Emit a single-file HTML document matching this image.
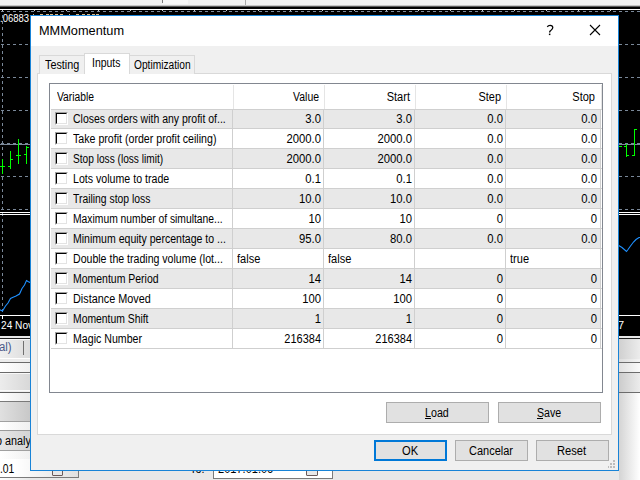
<!DOCTYPE html>
<html><head><meta charset="utf-8"><style>
html,body{margin:0;padding:0;}
body{width:640px;height:480px;overflow:hidden;position:relative;background:#000;font-family:"Liberation Sans", sans-serif;}
body>div{position:absolute;}
.t{white-space:pre;line-height:16px;font-family:"Liberation Sans", sans-serif;}
.cb{width:13px;height:13px;box-sizing:border-box;background:#fff;border-top:1px solid #a0a0a0;border-left:1px solid #a0a0a0;border-right:1px solid #fff;border-bottom:1px solid #fff;}
.cb::before{content:"";position:absolute;left:0;top:0;width:11px;height:11px;box-sizing:border-box;border-top:1px solid #000;border-left:1px solid #000;border-right:1px solid #e3e3e3;border-bottom:1px solid #e3e3e3;}
</style></head><body>
<div style="left:0px;top:0px;width:640px;height:5px;background:#f0f0f0;"></div>
<div style="left:162px;top:0px;width:1px;height:3px;background:#7a7a7a;"></div>
<div style="left:163px;top:0px;width:25px;height:4px;background:#f8f8f8;"></div>
<div style="left:245px;top:0px;width:1px;height:5px;background:#a8a8a8;"></div>
<div style="left:0px;top:5px;width:640px;height:1px;background:#c4c4c4;"></div>
<div style="left:0px;top:6px;width:640px;height:1px;background:#5a5a5a;"></div>
<div style="left:0px;top:7px;width:640px;height:2px;background:#000;"></div>
<div style="left:0px;top:9px;width:640px;height:1px;background:#fff;"></div>
<div style="left:0px;top:10px;width:640px;height:326px;background:#000;"></div>
<div style="left:1px;top:11px;width:639px;height:1px;background:repeating-linear-gradient(90deg,#7a8899 0 3px,transparent 3px 6px)"></div>
<div style="left:1px;top:44px;width:639px;height:1px;background:repeating-linear-gradient(90deg,#7a8899 0 3px,transparent 3px 6px)"></div>
<div style="left:1px;top:77px;width:639px;height:1px;background:repeating-linear-gradient(90deg,#7a8899 0 3px,transparent 3px 6px)"></div>
<div style="left:1px;top:110px;width:639px;height:1px;background:repeating-linear-gradient(90deg,#7a8899 0 3px,transparent 3px 6px)"></div>
<div style="left:1px;top:176px;width:639px;height:1px;background:repeating-linear-gradient(90deg,#7a8899 0 3px,transparent 3px 6px)"></div>
<div style="left:1px;top:209px;width:639px;height:1px;background:repeating-linear-gradient(90deg,#7a8899 0 3px,transparent 3px 6px)"></div>
<div style="left:0px;top:144px;width:640px;height:1px;background:#7a8899;"></div>
<div style="left:1px;top:143px;width:639px;height:1px;background:repeating-linear-gradient(90deg,#7a8899 0 3px,transparent 3px 6px)"></div>
<div style="left:2px;top:9px;width:1px;height:306px;background:repeating-linear-gradient(180deg,#7a8899 0 3px,transparent 3px 6px)"></div>
<div style="left:2px;top:9px;width:1px;height:1px;background:#fff;"></div>
<div style="left:2px;top:10px;width:1px;height:1px;background:#c8c8c8;"></div>
<div style="left:34px;top:10px;width:1px;height:1px;background:#c8c8c8;"></div>
<div style="left:66px;top:10px;width:1px;height:1px;background:#c8c8c8;"></div>
<div style="left:98px;top:10px;width:1px;height:1px;background:#c8c8c8;"></div>
<div style="left:130px;top:10px;width:1px;height:1px;background:#c8c8c8;"></div>
<div style="left:162px;top:10px;width:1px;height:1px;background:#c8c8c8;"></div>
<div style="left:194px;top:10px;width:1px;height:1px;background:#c8c8c8;"></div>
<div style="left:226px;top:10px;width:1px;height:1px;background:#c8c8c8;"></div>
<div style="left:258px;top:10px;width:1px;height:1px;background:#c8c8c8;"></div>
<div style="left:290px;top:10px;width:1px;height:1px;background:#c8c8c8;"></div>
<div style="left:322px;top:10px;width:1px;height:1px;background:#c8c8c8;"></div>
<div style="left:354px;top:10px;width:1px;height:1px;background:#c8c8c8;"></div>
<div style="left:386px;top:10px;width:1px;height:1px;background:#c8c8c8;"></div>
<div style="left:418px;top:10px;width:1px;height:1px;background:#c8c8c8;"></div>
<div style="left:450px;top:10px;width:1px;height:1px;background:#c8c8c8;"></div>
<div style="left:482px;top:10px;width:1px;height:1px;background:#c8c8c8;"></div>
<div style="left:514px;top:10px;width:1px;height:1px;background:#c8c8c8;"></div>
<div style="left:546px;top:10px;width:1px;height:1px;background:#c8c8c8;"></div>
<div style="left:578px;top:10px;width:1px;height:1px;background:#c8c8c8;"></div>
<div style="left:610px;top:10px;width:1px;height:1px;background:#c8c8c8;"></div>
<div style="left:33px;top:14px;width:1px;height:1px;background:#d8b888;"></div>
<div style="left:40px;top:14px;width:3px;height:1px;background:#d8b888;"></div>
<div style="left:46px;top:14px;width:3px;height:1px;background:#d8b888;"></div>
<div style="left:50px;top:14px;width:3px;height:1px;background:#d8b888;"></div>
<div style="left:55px;top:14px;width:3px;height:1px;background:#d8b888;"></div>
<div style="left:60px;top:14px;width:3px;height:1px;background:#d8b888;"></div>
<div style="left:69px;top:14px;width:1px;height:1px;background:#d8b888;"></div>
<div style="left:76px;top:14px;width:3px;height:1px;background:#d8b888;"></div>
<div style="left:82px;top:14px;width:3px;height:1px;background:#d8b888;"></div>
<div style="left:87px;top:14px;width:3px;height:1px;background:#d8b888;"></div>
<div style="left:92px;top:14px;width:3px;height:1px;background:#d8b888;"></div>
<div style="left:96px;top:14px;width:3px;height:1px;background:#d8b888;"></div>
<div style="left:2px;top:159px;width:1px;height:15px;background:#00ff00;"></div>
<div style="left:0px;top:166px;width:2px;height:1px;background:#00ff00;"></div>
<div style="left:3px;top:166px;width:2px;height:1px;background:#00ff00;"></div>
<div style="left:10px;top:151px;width:1px;height:18px;background:#00ff00;"></div>
<div style="left:8px;top:166px;width:2px;height:1px;background:#00ff00;"></div>
<div style="left:11px;top:159px;width:2px;height:1px;background:#00ff00;"></div>
<div style="left:18px;top:139px;width:1px;height:25px;background:#00ff00;"></div>
<div style="left:16px;top:155px;width:2px;height:1px;background:#00ff00;"></div>
<div style="left:19px;top:155px;width:2px;height:1px;background:#00ff00;"></div>
<div style="left:26px;top:146px;width:1px;height:18px;background:#00ff00;"></div>
<div style="left:24px;top:154px;width:2px;height:1px;background:#00ff00;"></div>
<div style="left:27px;top:147px;width:2px;height:1px;background:#00ff00;"></div>
<div style="left:626px;top:144px;width:1px;height:13px;background:#00ff00;"></div>
<div style="left:624px;top:146px;width:2px;height:1px;background:#00ff00;"></div>
<div style="left:627px;top:155px;width:2px;height:1px;background:#00ff00;"></div>
<div style="left:634px;top:129px;width:1px;height:27px;background:#00ff00;"></div>
<div style="left:632px;top:155px;width:2px;height:1px;background:#00ff00;"></div>
<div style="left:635px;top:129px;width:2px;height:1px;background:#00ff00;"></div>
<div style="left:619px;top:146px;width:3px;height:1px;background:#00ff00;"></div>
<div style="left:0px;top:212px;width:640px;height:1px;background:#fff;"></div>
<div style="left:0px;top:214px;width:640px;height:1px;background:#fff;"></div>
<svg style="position:absolute;left:0;top:0" width="640" height="480"><polyline fill="none" stroke="#1e90ff" stroke-width="1.1" points="-1,309.5 2.5,311 5.5,306 8,303 10.5,298.5 12.5,297.5 16,296 19.5,294 22,288.5 24.5,285 26.5,280.5 28,281.5 31,283"/><polyline fill="none" stroke="#1e90ff" stroke-width="1.1" points="617,244.5 622,247.5 626.5,251.5 628,249.5 630.5,246 633.5,242 636,239.5 639,237.5 641,237.5"/></svg>
<div style="left:0px;top:315px;width:640px;height:1px;background:#fff;"></div>
<div style="left:2px;top:316px;width:1px;height:3px;background:#fff;"></div>
<div class="t" style="left:0px;top:10px;transform-origin:0 0;transform:scaleX(0.86);font-size:11px;color:#fff;">.06883</div>
<div class="t" style="left:1px;top:317px;transform-origin:0 0;transform:scaleX(0.92);font-size:11px;color:#fff;">24 Nov</div>
<div class="t" style="left:618px;top:317px;transform-origin:0 0;font-size:11px;color:#fff;">7</div>
<div style="left:0px;top:336px;width:640px;height:2px;background:#e8e8e8"></div>
<div style="left:0px;top:338px;width:640px;height:1px;background:#202020"></div>
<div style="left:0px;top:339px;width:640px;height:1px;background:#fafafa"></div>
<div style="left:0px;top:340px;width:640px;height:18px;background:linear-gradient(90deg,#f0f0f0,#dcdcdc 30px,#dcdcdc)"></div>
<div style="left:0px;top:358px;width:640px;height:1px;background:#ffffff"></div>
<div style="left:0px;top:359px;width:640px;height:3px;background:#ececec"></div>
<div style="left:0px;top:362px;width:640px;height:1px;background:#6a6a6a"></div>
<div style="left:0px;top:363px;width:640px;height:9px;background:linear-gradient(90deg,#ffffff,#f0f0f0 30px,#f0f0f0)"></div>
<div style="left:0px;top:372px;width:640px;height:1px;background:#6a6a6a"></div>
<div style="left:0px;top:373px;width:640px;height:1px;background:#f8f8f8"></div>
<div style="left:0px;top:374px;width:640px;height:16px;background:linear-gradient(90deg,#ececec,#d8d8d8 30px,#d8d8d8)"></div>
<div style="left:0px;top:390px;width:640px;height:1px;background:#fafafa"></div>
<div style="left:0px;top:391px;width:640px;height:1px;background:#f0f0f0"></div>
<div style="left:0px;top:392px;width:640px;height:1px;background:#606060"></div>
<div style="left:0px;top:393px;width:640px;height:8px;background:linear-gradient(90deg,#ffffff,#eaeaea 30px,#eaeaea)"></div>
<div style="left:0px;top:401px;width:640px;height:1px;background:#7a7a7a"></div>
<div style="left:0px;top:402px;width:640px;height:19px;background:linear-gradient(90deg,#e0e0e0,#c8c8c8 30px,#c8c8c8)"></div>
<div style="left:0px;top:421px;width:640px;height:1px;background:#a0a0a0"></div>
<div style="left:0px;top:422px;width:640px;height:8px;background:linear-gradient(90deg,#ffffff,#f0f0f0 30px,#f0f0f0)"></div>
<div style="left:0px;top:430px;width:640px;height:1px;background:#9a9a9a"></div>
<div style="left:0px;top:431px;width:640px;height:19px;background:linear-gradient(90deg,#e6e6e6,#d4d4d4 30px,#d4d4d4)"></div>
<div style="left:0px;top:450px;width:640px;height:1px;background:#a0a0a0"></div>
<div style="left:0px;top:451px;width:640px;height:8px;background:linear-gradient(90deg,#ffffff,#f0f0f0 30px,#f0f0f0)"></div>
<div style="left:0px;top:459px;width:640px;height:1px;background:#707070"></div>
<div style="left:0px;top:460px;width:640px;height:20px;background:linear-gradient(90deg,#ffffff,#e8e8e8 30px,#e8e8e8)"></div>
<div class="t" style="left:-1px;top:339px;transform-origin:0 0;transform:scaleX(0.95);font-size:12px;color:#4a5a8a;">al)</div>
<div style="left:23px;top:341px;width:1px;height:14px;background:#707070;"></div>
<div class="t" style="left:-4px;top:433px;transform-origin:0 0;transform:scaleX(0.9);font-size:12px;color:#000;">o analy</div>
<div style="left:-5px;top:459px;width:84px;height:19px;background:linear-gradient(90deg,#fff,#fff 20px,#e0e0e0);border-right:1px solid #7a7a7a;border-bottom:1px solid #7a7a7a;box-sizing:border-box"></div>
<div class="t" style="left:0px;top:461px;transform-origin:0 0;transform:scaleX(0.86);font-size:12px;color:#000;">.01</div>
<div style="left:213px;top:459px;width:120px;height:20px;background:#fff;border:1px solid #7a7a7a;box-sizing:border-box"></div>
<div class="t" style="left:190px;top:461px;transform-origin:0 0;transform:scaleX(0.9);font-size:12px;color:#000;">To:</div>
<div class="t" style="left:218px;top:461px;transform-origin:0 0;transform:scaleX(0.92);font-size:12px;color:#000;">2017.01.06</div>
<div style="left:306px;top:466px;width:12px;height:10px;background:#e8e8e8;border:1px solid #6a5a5a;border-radius:1px;box-sizing:border-box"></div>
<div style="left:52px;top:466px;width:11px;height:10px;background:#e8e8e8;border:1px solid #6a5a5a;border-radius:1px;box-sizing:border-box"></div>
<div style="left:619px;top:339px;width:21px;height:20px;background:linear-gradient(90deg,#d0d0d0,#ececec)"></div>
<div style="left:619px;top:359px;width:21px;height:3px;background:linear-gradient(90deg,#dcdcdc,#f4f4f4)"></div>
<div style="left:619px;top:362px;width:21px;height:1px;background:#6c6c6c;"></div>
<div style="left:619px;top:363px;width:21px;height:9px;background:linear-gradient(90deg,#e0e0e0,#fafafa)"></div>
<div style="left:619px;top:372px;width:21px;height:1px;background:#6c6c6c;"></div>
<div style="left:619px;top:373px;width:21px;height:19px;background:linear-gradient(90deg,#cccccc,#ececec)"></div>
<div style="left:619px;top:392px;width:21px;height:1px;background:#6c6c6c;"></div>
<div style="left:619px;top:393px;width:21px;height:87px;background:linear-gradient(90deg,#d4d4d4,#ffffff)"></div>
<div style="left:30px;top:15px;width:589px;height:456px;background:#f0f0f0;border:1px solid #1883d7;box-sizing:border-box"></div>
<div style="left:31px;top:16px;width:587px;height:30px;background:#fff;"></div>
<div class="t" style="left:39px;top:23px;transform-origin:0 0;font-size:12.75px;color:#000;">MMMomentum</div>
<svg style="position:absolute;left:540px;top:20px" width="20" height="20"><path d="M7.3 6.9C7.9 5.8 8.9 5.3 10.1 5.3C11.7 5.3 12.8 6.3 12.8 7.6C12.8 9.1 11.4 9.8 10.4 10.8C9.9 11.3 9.6 11.8 9.6 12.6" fill="none" stroke="#000" stroke-width="1.25"/><rect x="8.9" y="13.6" width="1.5" height="1.5" fill="#000"/></svg>
<svg style="position:absolute;left:589px;top:24px" width="12" height="12"><path d="M1 1L11 11M11 1L1 11" stroke="#000" stroke-width="1.1"/></svg>
<div style="left:37px;top:73px;width:575px;height:362px;background:#fff;border:1px solid #d9d9d9;box-sizing:border-box"></div>
<div style="left:39px;top:55px;width:46px;height:19px;background:#f0f0f0;border:1px solid #d9d9d9;border-bottom:none;box-sizing:border-box"></div>
<div style="left:129px;top:55px;width:66px;height:19px;background:#f0f0f0;border:1px solid #d9d9d9;border-bottom:none;box-sizing:border-box"></div>
<div style="left:84px;top:53px;width:46px;height:21px;background:#fff;border:1px solid #d9d9d9;border-bottom:none;box-sizing:border-box"></div>
<div class="t" style="left:45px;top:57px;transform-origin:0 0;transform:scaleX(0.9);font-size:12px;color:#000;">Testing</div>
<div class="t" style="left:92px;top:55px;transform-origin:0 0;transform:scaleX(0.87);font-size:12px;color:#000;">Inputs</div>
<div class="t" style="left:134px;top:57px;transform-origin:0 0;transform:scaleX(0.85);font-size:12px;color:#000;">Optimization</div>
<div style="left:49px;top:83px;width:554px;height:310px;background:#fff;border:1px solid #828790;box-sizing:border-box"></div>
<div style="left:233px;top:85px;width:1px;height:24px;background:#e5e5e5;"></div>
<div style="left:324px;top:85px;width:1px;height:24px;background:#e5e5e5;"></div>
<div style="left:415px;top:85px;width:1px;height:24px;background:#e5e5e5;"></div>
<div style="left:506px;top:85px;width:1px;height:24px;background:#e5e5e5;"></div>
<div style="left:601px;top:85px;width:1px;height:24px;background:#e5e5e5;"></div>
<div class="t" style="left:57px;top:89px;transform-origin:0 0;transform:scaleX(0.86);font-size:12px;color:#000;">Variable</div>
<div class="t" style="left:-81px;width:400px;text-align:right;top:89px;transform-origin:100% 0;transform:scaleX(0.87);font-size:12px;color:#000;">Value</div>
<div class="t" style="left:10px;width:400px;text-align:right;top:89px;transform-origin:100% 0;transform:scaleX(0.92);font-size:12px;color:#000;">Start</div>
<div class="t" style="left:101px;width:400px;text-align:right;top:89px;transform-origin:100% 0;transform:scaleX(0.91);font-size:12px;color:#000;">Step</div>
<div class="t" style="left:195px;width:400px;text-align:right;top:89px;transform-origin:100% 0;transform:scaleX(0.92);font-size:12px;color:#000;">Stop</div>
<div style="left:51px;top:109px;width:551px;height:1px;background:#cfcfcf;"></div>
<div style="left:51px;top:110px;width:550px;height:18px;background:#e8e8e8;"></div>
<div style="left:51px;top:128px;width:551px;height:1px;background:#cfcfcf;"></div>
<div style="left:51px;top:148px;width:551px;height:1px;background:#cfcfcf;"></div>
<div style="left:51px;top:149px;width:550px;height:19px;background:#e8e8e8;"></div>
<div style="left:51px;top:168px;width:551px;height:1px;background:#cfcfcf;"></div>
<div style="left:51px;top:188px;width:551px;height:1px;background:#cfcfcf;"></div>
<div style="left:51px;top:189px;width:550px;height:19px;background:#e8e8e8;"></div>
<div style="left:51px;top:208px;width:551px;height:1px;background:#cfcfcf;"></div>
<div style="left:51px;top:228px;width:551px;height:1px;background:#cfcfcf;"></div>
<div style="left:51px;top:229px;width:550px;height:19px;background:#e8e8e8;"></div>
<div style="left:51px;top:248px;width:551px;height:1px;background:#cfcfcf;"></div>
<div style="left:51px;top:268px;width:551px;height:1px;background:#cfcfcf;"></div>
<div style="left:51px;top:269px;width:550px;height:19px;background:#e8e8e8;"></div>
<div style="left:51px;top:288px;width:551px;height:1px;background:#cfcfcf;"></div>
<div style="left:51px;top:308px;width:551px;height:1px;background:#cfcfcf;"></div>
<div style="left:51px;top:309px;width:550px;height:19px;background:#e8e8e8;"></div>
<div style="left:51px;top:328px;width:551px;height:1px;background:#cfcfcf;"></div>
<div style="left:51px;top:348px;width:551px;height:1px;background:#cfcfcf;"></div>
<div style="left:232px;top:110px;width:1px;height:239px;background:#cfcfcf;"></div>
<div style="left:323px;top:110px;width:1px;height:239px;background:#cfcfcf;"></div>
<div style="left:414px;top:110px;width:1px;height:239px;background:#cfcfcf;"></div>
<div style="left:505px;top:110px;width:1px;height:239px;background:#cfcfcf;"></div>
<div style="left:600px;top:110px;width:1px;height:239px;background:#cfcfcf;"></div>
<div class="cb" style="left:55px;top:112px"></div>
<div class="t" style="left:73px;top:111px;transform-origin:0 0;transform:scaleX(0.874);font-size:12px;color:#000;">Closes orders with any profit of...</div>
<div class="t" style="left:-79px;width:400px;text-align:right;top:111px;transform-origin:100% 0;transform:scaleX(0.94);font-size:12px;color:#000;">3.0</div>
<div class="t" style="left:12px;width:400px;text-align:right;top:111px;transform-origin:100% 0;transform:scaleX(0.94);font-size:12px;color:#000;">3.0</div>
<div class="t" style="left:103px;width:400px;text-align:right;top:111px;transform-origin:100% 0;transform:scaleX(0.94);font-size:12px;color:#000;">0.0</div>
<div class="t" style="left:197px;width:400px;text-align:right;top:111px;transform-origin:100% 0;transform:scaleX(0.94);font-size:12px;color:#000;">0.0</div>
<div class="cb" style="left:55px;top:132px"></div>
<div class="t" style="left:73px;top:131px;transform-origin:0 0;transform:scaleX(0.885);font-size:12px;color:#000;">Take profit (order profit ceiling)</div>
<div class="t" style="left:-79px;width:400px;text-align:right;top:131px;transform-origin:100% 0;transform:scaleX(0.94);font-size:12px;color:#000;">2000.0</div>
<div class="t" style="left:12px;width:400px;text-align:right;top:131px;transform-origin:100% 0;transform:scaleX(0.94);font-size:12px;color:#000;">2000.0</div>
<div class="t" style="left:103px;width:400px;text-align:right;top:131px;transform-origin:100% 0;transform:scaleX(0.94);font-size:12px;color:#000;">0.0</div>
<div class="t" style="left:197px;width:400px;text-align:right;top:131px;transform-origin:100% 0;transform:scaleX(0.94);font-size:12px;color:#000;">0.0</div>
<div class="cb" style="left:55px;top:152px"></div>
<div class="t" style="left:73px;top:151px;transform-origin:0 0;transform:scaleX(0.845);font-size:12px;color:#000;">Stop loss (loss limit)</div>
<div class="t" style="left:-79px;width:400px;text-align:right;top:151px;transform-origin:100% 0;transform:scaleX(0.94);font-size:12px;color:#000;">2000.0</div>
<div class="t" style="left:12px;width:400px;text-align:right;top:151px;transform-origin:100% 0;transform:scaleX(0.94);font-size:12px;color:#000;">2000.0</div>
<div class="t" style="left:103px;width:400px;text-align:right;top:151px;transform-origin:100% 0;transform:scaleX(0.94);font-size:12px;color:#000;">0.0</div>
<div class="t" style="left:197px;width:400px;text-align:right;top:151px;transform-origin:100% 0;transform:scaleX(0.94);font-size:12px;color:#000;">0.0</div>
<div class="cb" style="left:55px;top:172px"></div>
<div class="t" style="left:73px;top:171px;transform-origin:0 0;transform:scaleX(0.885);font-size:12px;color:#000;">Lots volume to trade</div>
<div class="t" style="left:-79px;width:400px;text-align:right;top:171px;transform-origin:100% 0;transform:scaleX(0.94);font-size:12px;color:#000;">0.1</div>
<div class="t" style="left:12px;width:400px;text-align:right;top:171px;transform-origin:100% 0;transform:scaleX(0.94);font-size:12px;color:#000;">0.1</div>
<div class="t" style="left:103px;width:400px;text-align:right;top:171px;transform-origin:100% 0;transform:scaleX(0.94);font-size:12px;color:#000;">0.0</div>
<div class="t" style="left:197px;width:400px;text-align:right;top:171px;transform-origin:100% 0;transform:scaleX(0.94);font-size:12px;color:#000;">0.0</div>
<div class="cb" style="left:55px;top:192px"></div>
<div class="t" style="left:73px;top:191px;transform-origin:0 0;transform:scaleX(0.864);font-size:12px;color:#000;">Trailing stop loss</div>
<div class="t" style="left:-79px;width:400px;text-align:right;top:191px;transform-origin:100% 0;transform:scaleX(0.94);font-size:12px;color:#000;">10.0</div>
<div class="t" style="left:12px;width:400px;text-align:right;top:191px;transform-origin:100% 0;transform:scaleX(0.94);font-size:12px;color:#000;">10.0</div>
<div class="t" style="left:103px;width:400px;text-align:right;top:191px;transform-origin:100% 0;transform:scaleX(0.94);font-size:12px;color:#000;">0.0</div>
<div class="t" style="left:197px;width:400px;text-align:right;top:191px;transform-origin:100% 0;transform:scaleX(0.94);font-size:12px;color:#000;">0.0</div>
<div class="cb" style="left:55px;top:212px"></div>
<div class="t" style="left:73px;top:211px;transform-origin:0 0;transform:scaleX(0.86);font-size:12px;color:#000;">Maximum number of simultane...</div>
<div class="t" style="left:-79px;width:400px;text-align:right;top:211px;transform-origin:100% 0;transform:scaleX(0.94);font-size:12px;color:#000;">10</div>
<div class="t" style="left:12px;width:400px;text-align:right;top:211px;transform-origin:100% 0;transform:scaleX(0.94);font-size:12px;color:#000;">10</div>
<div class="t" style="left:103px;width:400px;text-align:right;top:211px;transform-origin:100% 0;transform:scaleX(0.94);font-size:12px;color:#000;">0</div>
<div class="t" style="left:197px;width:400px;text-align:right;top:211px;transform-origin:100% 0;transform:scaleX(0.94);font-size:12px;color:#000;">0</div>
<div class="cb" style="left:55px;top:232px"></div>
<div class="t" style="left:73px;top:231px;transform-origin:0 0;transform:scaleX(0.878);font-size:12px;color:#000;">Minimum equity percentage to ...</div>
<div class="t" style="left:-79px;width:400px;text-align:right;top:231px;transform-origin:100% 0;transform:scaleX(0.94);font-size:12px;color:#000;">95.0</div>
<div class="t" style="left:12px;width:400px;text-align:right;top:231px;transform-origin:100% 0;transform:scaleX(0.94);font-size:12px;color:#000;">80.0</div>
<div class="t" style="left:103px;width:400px;text-align:right;top:231px;transform-origin:100% 0;transform:scaleX(0.94);font-size:12px;color:#000;">0.0</div>
<div class="t" style="left:197px;width:400px;text-align:right;top:231px;transform-origin:100% 0;transform:scaleX(0.94);font-size:12px;color:#000;">0.0</div>
<div class="cb" style="left:55px;top:252px"></div>
<div class="t" style="left:73px;top:251px;transform-origin:0 0;transform:scaleX(0.881);font-size:12px;color:#000;">Double the trading volume (lot...</div>
<div class="t" style="left:237px;top:251px;transform-origin:0 0;transform:scaleX(0.92);font-size:12px;color:#000;">false</div>
<div class="t" style="left:328px;top:251px;transform-origin:0 0;transform:scaleX(0.92);font-size:12px;color:#000;">false</div>
<div class="t" style="left:510px;top:251px;transform-origin:0 0;transform:scaleX(0.92);font-size:12px;color:#000;">true</div>
<div class="cb" style="left:55px;top:272px"></div>
<div class="t" style="left:73px;top:271px;transform-origin:0 0;transform:scaleX(0.873);font-size:12px;color:#000;">Momentum Period</div>
<div class="t" style="left:-79px;width:400px;text-align:right;top:271px;transform-origin:100% 0;transform:scaleX(0.94);font-size:12px;color:#000;">14</div>
<div class="t" style="left:12px;width:400px;text-align:right;top:271px;transform-origin:100% 0;transform:scaleX(0.94);font-size:12px;color:#000;">14</div>
<div class="t" style="left:103px;width:400px;text-align:right;top:271px;transform-origin:100% 0;transform:scaleX(0.94);font-size:12px;color:#000;">0</div>
<div class="t" style="left:197px;width:400px;text-align:right;top:271px;transform-origin:100% 0;transform:scaleX(0.94);font-size:12px;color:#000;">0</div>
<div class="cb" style="left:55px;top:292px"></div>
<div class="t" style="left:73px;top:291px;transform-origin:0 0;transform:scaleX(0.903);font-size:12px;color:#000;">Distance Moved</div>
<div class="t" style="left:-79px;width:400px;text-align:right;top:291px;transform-origin:100% 0;transform:scaleX(0.94);font-size:12px;color:#000;">100</div>
<div class="t" style="left:12px;width:400px;text-align:right;top:291px;transform-origin:100% 0;transform:scaleX(0.94);font-size:12px;color:#000;">100</div>
<div class="t" style="left:103px;width:400px;text-align:right;top:291px;transform-origin:100% 0;transform:scaleX(0.94);font-size:12px;color:#000;">0</div>
<div class="t" style="left:197px;width:400px;text-align:right;top:291px;transform-origin:100% 0;transform:scaleX(0.94);font-size:12px;color:#000;">0</div>
<div class="cb" style="left:55px;top:312px"></div>
<div class="t" style="left:73px;top:311px;transform-origin:0 0;transform:scaleX(0.864);font-size:12px;color:#000;">Momentum Shift</div>
<div class="t" style="left:-79px;width:400px;text-align:right;top:311px;transform-origin:100% 0;transform:scaleX(0.94);font-size:12px;color:#000;">1</div>
<div class="t" style="left:12px;width:400px;text-align:right;top:311px;transform-origin:100% 0;transform:scaleX(0.94);font-size:12px;color:#000;">1</div>
<div class="t" style="left:103px;width:400px;text-align:right;top:311px;transform-origin:100% 0;transform:scaleX(0.94);font-size:12px;color:#000;">0</div>
<div class="t" style="left:197px;width:400px;text-align:right;top:311px;transform-origin:100% 0;transform:scaleX(0.94);font-size:12px;color:#000;">0</div>
<div class="cb" style="left:55px;top:332px"></div>
<div class="t" style="left:73px;top:331px;transform-origin:0 0;transform:scaleX(0.884);font-size:12px;color:#000;">Magic Number</div>
<div class="t" style="left:-79px;width:400px;text-align:right;top:331px;transform-origin:100% 0;transform:scaleX(0.915);font-size:12px;color:#000;">216384</div>
<div class="t" style="left:12px;width:400px;text-align:right;top:331px;transform-origin:100% 0;transform:scaleX(0.915);font-size:12px;color:#000;">216384</div>
<div class="t" style="left:103px;width:400px;text-align:right;top:331px;transform-origin:100% 0;transform:scaleX(0.94);font-size:12px;color:#000;">0</div>
<div class="t" style="left:197px;width:400px;text-align:right;top:331px;transform-origin:100% 0;transform:scaleX(0.94);font-size:12px;color:#000;">0</div>
<div style="left:386px;top:402px;width:103px;height:21px;background:#e1e1e1;border:1px solid #adadad;box-sizing:border-box"></div>
<div class="t" style="left:425px;top:405px;transform-origin:0 0;transform:scaleX(0.89);font-size:12px;color:#000;">Load</div>
<div style="left:425px;top:418px;width:6px;height:1px;background:#000;"></div>
<div style="left:498px;top:402px;width:103px;height:21px;background:#e1e1e1;border:1px solid #adadad;box-sizing:border-box"></div>
<div class="t" style="left:537px;top:405px;transform-origin:0 0;transform:scaleX(0.885);font-size:12px;color:#000;">Save</div>
<div style="left:537px;top:418px;width:6px;height:1px;background:#000;"></div>
<div style="left:374px;top:440px;width:73px;height:21px;background:#e1e1e1;border:2px solid #0078d7;box-sizing:border-box"></div>
<div class="t" style="left:402px;top:443px;transform-origin:0 0;transform:scaleX(0.93);font-size:12px;color:#000;">OK</div>
<div style="left:455px;top:440px;width:73px;height:21px;background:#e1e1e1;border:1px solid #adadad;box-sizing:border-box"></div>
<div class="t" style="left:469px;top:443px;transform-origin:0 0;transform:scaleX(0.915);font-size:12px;color:#000;">Cancelar</div>
<div style="left:536px;top:440px;width:73px;height:21px;background:#e1e1e1;border:1px solid #adadad;box-sizing:border-box"></div>
<div class="t" style="left:557px;top:443px;transform-origin:0 0;transform:scaleX(0.93);font-size:12px;color:#000;">Reset</div>
<div style="left:613px;top:460px;width:2px;height:2px;background:#bcbcbc;"></div>
<div style="left:610px;top:463px;width:2px;height:2px;background:#bcbcbc;"></div>
<div style="left:613px;top:463px;width:2px;height:2px;background:#bcbcbc;"></div>
<div style="left:610px;top:466px;width:2px;height:2px;background:#bcbcbc;"></div>
<div style="left:613px;top:466px;width:2px;height:2px;background:#bcbcbc;"></div>
<div style="left:608px;top:466px;width:1px;height:2px;background:#bcbcbc;"></div>
</body></html>
